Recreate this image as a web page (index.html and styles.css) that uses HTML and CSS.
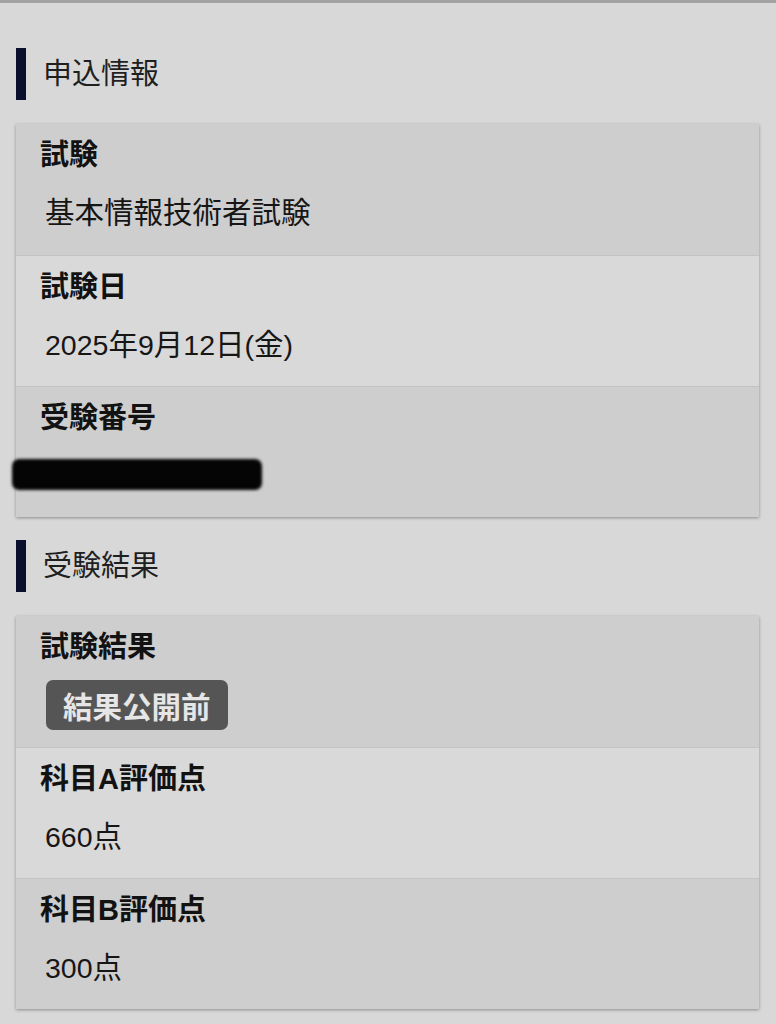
FILE: index.html
```html
<!DOCTYPE html>
<html lang="ja">
<head>
<meta charset="utf-8">
<link rel="stylesheet" href="styles.css">
</head>
<body>
<div class="page">
  <h2 class="section-title"><span class="bar"></span><span class="title-text">申込情報</span></h2>
  <div class="card">
    <div class="row odd">
      <div class="label">試験</div>
      <div class="value">基本情報技術者試験</div>
    </div>
    <div class="row even">
      <div class="label">試験日</div>
      <div class="value"><span class="num">2025</span>年<span class="num">9</span>月<span class="num">12</span>日<span class="num">(</span>金<span class="num">)</span></div>
    </div>
    <div class="row odd">
      <div class="label">受験番号</div>
      <div class="value redact-wrap"><span class="redact"></span></div>
    </div>
  </div>

  <h2 class="section-title"><span class="bar"></span><span class="title-text">受験結果</span></h2>
  <div class="card">
    <div class="row odd">
      <div class="label">試験結果</div>
      <div class="badge-wrap"><span class="badge">結果公開前</span></div>
    </div>
    <div class="row even">
      <div class="label">科目A評価点</div>
      <div class="value"><span class="num">660</span>点</div>
    </div>
    <div class="row odd">
      <div class="label">科目B評価点</div>
      <div class="value"><span class="num">300</span>点</div>
    </div>
  </div>
</div>
</body>
</html>
```

FILE: styles.css
```css
html, body {
  margin: 0;
  padding: 0;
  background: #d8d8d8;
}
body {
  font-family: "Liberation Sans", "Noto Sans CJK JP", sans-serif;
  color: #151515;
  border-top: 3px solid #a3a3a3;
  width: 776px;
  min-height: 1021px;
}
.page {
  padding: 45px 17px 0 16px;
  display: flex;
  flex-direction: column;
}
.section-title {
  display: flex;
  align-items: center;
  margin: 0 0 24px 0;
  font-size: 29px;
  font-weight: normal;
  color: #1f1f1f;
  height: 52px;
}
.bar {
  width: 10px;
  height: 52px;
  background: #0b0f2e;
}
.title-text {
  margin-left: 17px;
  line-height: 52px;
}
.card {
  box-shadow: 0 1px 3px rgba(0,0,0,0.35);
  margin-bottom: 23px;
  display: flex;
  flex-direction: column;
}
.row {
  padding: 12px 24px 24px 24px;
  display: flex;
  flex-direction: column;
  height: 131px;
  box-sizing: border-box;
}
.row + .row {
  border-top: 1px solid #c3c3c3;
}
.odd { background: #cecece; }
.even { background: #d9d9d9; }
.label {
  font-size: 29px;
  font-weight: bold;
  line-height: 39px;
  color: #121212;
}
.value {
  font-size: 29.5px;
  line-height: 39px;
  margin-top: 18px;
  padding-left: 5px;
  color: #161616;
}
.num {
  font-size: 28.5px;
}
.redact-wrap {
  display: flex;
  align-items: flex-start;
  height: 39px;
  padding-left: 0;
}
.redact {
  display: block;
  margin-left: -28px;
  margin-top: 3px;
  width: 250px;
  height: 31px;
  background: #050505;
  border-radius: 7px;
  filter: blur(1.5px);
}
.badge-wrap {
  margin-top: 13px;
  padding-left: 6px;
  display: flex;
}
.badge {
  display: inline-flex;
  align-items: center;
  height: 50px;
  padding: 0 17px;
  background: #555555;
  border-radius: 7px;
  color: #e6e6e6;
  font-size: 29.5px;
  font-weight: bold;
}
```
